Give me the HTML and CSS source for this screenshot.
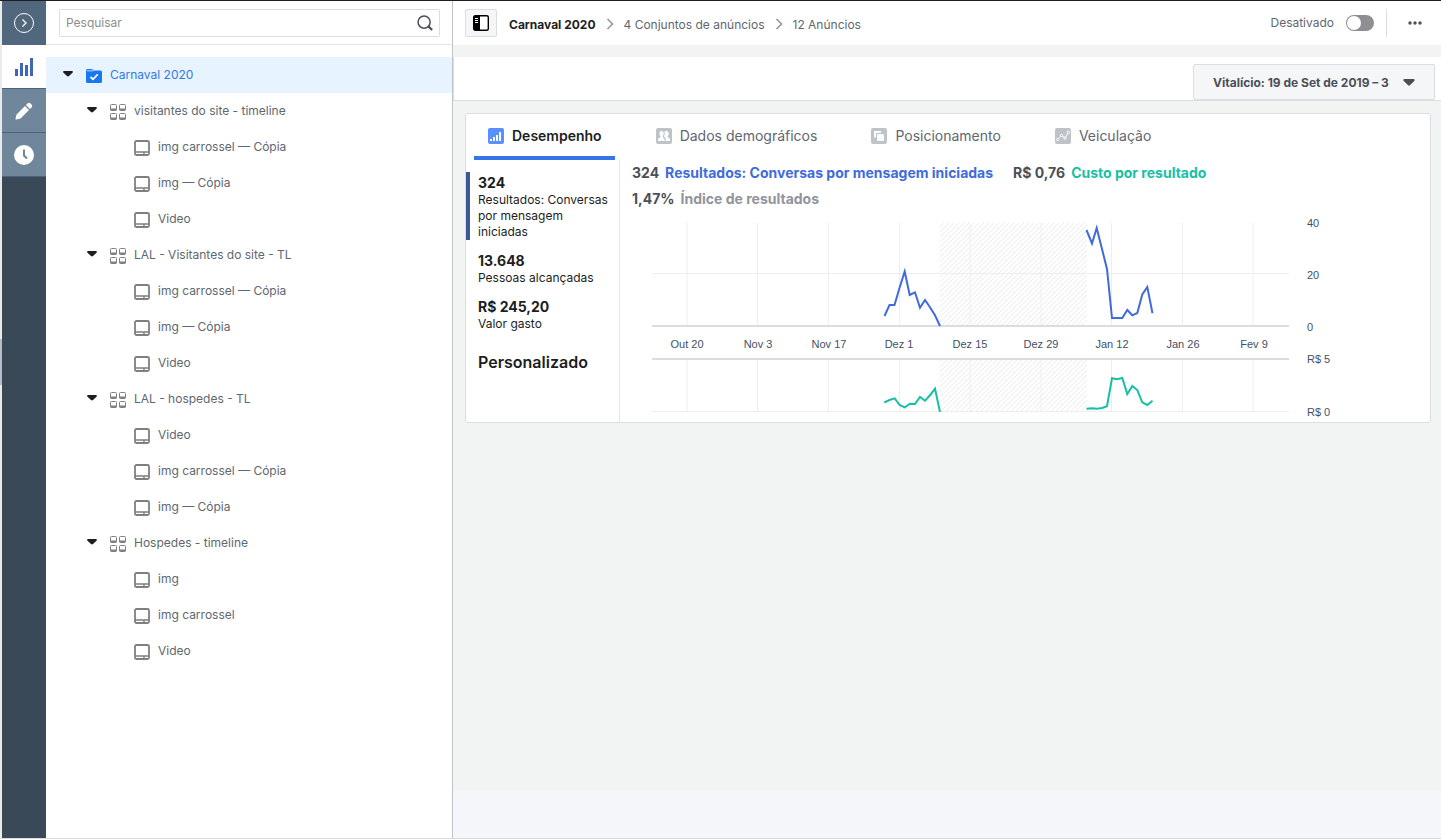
FILE: index.html
```html
<!DOCTYPE html>
<html lang="pt-BR">
<head>
  <meta charset="UTF-8" />
  <meta name="viewport" content="width=device-width, initial-scale=1.0"/>
  <title>Carnaval 2020</title>
  <link rel="stylesheet" href="styles.css">
</head>
<body>
  <!-- Shared icons -->
  <svg class="defs" width="0" height="0" aria-hidden="true">
    <symbol id="caret" viewBox="0 0 10 6"><path d="M1.2 0h7.6c1 0 1.4 1 .7 1.7L6 5.1c-.6.6-1.4.6-2 0L.5 1.7C-.2 1 .2 0 1.2 0z" fill="currentColor"/></symbol>
    <symbol id="adset" viewBox="0 0 16 16">
      <g fill="none" stroke="#7f7f7f">
        <rect x=".5" y=".5" width="6" height="6" rx="1"/><rect x="9.5" y=".5" width="6" height="6" rx="1"/>
        <rect x=".5" y="9.500" width="6" height="6" rx="1"/><rect x="9.500" y="9.500" width="6" height="6" rx="1"/>
      </g>
      <path d="M.5 4.500h6v2h-6zM9.500 4.500h6v2h-6zM.5 13.500h6v2h-6zM9.500 13.500h6v2h-6z" fill="#7f7f7f"/>
    </symbol>
    <symbol id="ad" viewBox="0 0 16 16">
      <rect x="1" y="1" width="14" height="14" rx="1.500" fill="none" stroke="#7f7f7f" stroke-width="1.800"/>
      <path d="M1 12h14M10 12v3" stroke="#7f7f7f" stroke-width="1.400"/>
    </symbol>
    <symbol id="chevron" viewBox="0 0 8 12"><path d="M1.500 1l5 5-5 5" fill="none" stroke="#8d949e" stroke-width="1.500"/></symbol>
  </svg>

  <div class="app">
    <div class="backdrop"></div>

    <nav class="rail">
      <button class="rail-btn top" aria-label="Expandir">
        <svg width="22" height="22" viewBox="0 0 22 22" fill="none" stroke="#fff"><circle cx="11" cy="11" r="9.500"/><path d="M9.500 7.500L13 11l-3.500 3.500" stroke-width="1.300"/></svg>
      </button>
      <button class="rail-btn active" aria-label="Gráficos">
        <svg width="18" height="18" viewBox="0 0 18 18" fill="#4267b2"><path d="M0 11h3v7H0zM5 5h3v13H5zM10 7h3v11h-3zM15 0h3v18h-3z"/></svg>
      </button>
      <button class="rail-btn" aria-label="Editar">
        <svg width="18" height="18" viewBox="0 0 18 18" fill="#fff"><path d="M10 4l4 4-8.500 8.500L1.300 17.600C.8 17.700.3 17.300.5 16.700L1.500 12.500z"/><path d="M11 3l1.500-1.500c.9-.9 2.200-.9 3 0l1 1c.9.900.9 2.100 0 3L15 7z"/></svg>
      </button>
      <button class="rail-btn" aria-label="Histórico">
        <svg width="20" height="20" viewBox="0 0 20 20"><circle cx="10" cy="10" r="10" fill="#fff"/><path d="M10 4.500v6l3 3" fill="none" stroke="#70869b" stroke-width="2"/></svg>
      </button>
    </nav>

    <aside class="sidebar">
      <form class="search">
        <input type="search" placeholder="Pesquisar" aria-label="Pesquisar">
        <button type="button" aria-label="Buscar">
          <svg width="16" height="16" viewBox="0 0 18 18" fill="none" stroke="#4b4f56" stroke-width="1.700"><circle cx="8" cy="8" r="6.800"/><path d="M12.800 12.800L17 17" stroke-width="2.400"/></svg>
        </button>
      </form>
      <ul class="tree">
        <li>
          <a href="#" class="row selected"><svg class="caret"><use href="#caret"/></svg>
            <svg class="icon" viewBox="0 0 16 16"><path d="M0 2.500C0 1.700.7 1 1.500 1h4.300c.5 0 .9.300 1.100.7l.3.800h7.300c.8 0 1.500.7 1.500 1.500v9.500c0 .8-.7 1.500-1.500 1.500h-13C.7 15 0 14.300 0 13.500z" fill="#1877f2"/><path d="M.8 2.800h6.500" stroke="#e7f3ff" stroke-width=".8"/><path d="M4.500 9l2.500 2.300 4.700-5" fill="none" stroke="#fff" stroke-width="1.700"/></svg><span>Carnaval 2020</span></a>
          <ul>
            <li>
              <a href="#" class="row"><svg class="caret"><use href="#caret"/></svg><svg class="icon"><use href="#adset"/></svg><span>visitantes do site - timeline</span></a>
              <ul>
                <li><a href="#" class="row ad"><svg class="icon"><use href="#ad"/></svg><span>img carrossel — Cópia</span></a></li>
                <li><a href="#" class="row ad"><svg class="icon"><use href="#ad"/></svg><span>img — Cópia</span></a></li>
                <li><a href="#" class="row ad"><svg class="icon"><use href="#ad"/></svg><span>Video</span></a></li>
              </ul>
            </li>
            <li>
              <a href="#" class="row"><svg class="caret"><use href="#caret"/></svg><svg class="icon"><use href="#adset"/></svg><span>LAL - Visitantes do site - TL</span></a>
              <ul>
                <li><a href="#" class="row ad"><svg class="icon"><use href="#ad"/></svg><span>img carrossel — Cópia</span></a></li>
                <li><a href="#" class="row ad"><svg class="icon"><use href="#ad"/></svg><span>img — Cópia</span></a></li>
                <li><a href="#" class="row ad"><svg class="icon"><use href="#ad"/></svg><span>Video</span></a></li>
              </ul>
            </li>
            <li>
              <a href="#" class="row"><svg class="caret"><use href="#caret"/></svg><svg class="icon"><use href="#adset"/></svg><span>LAL - hospedes - TL</span></a>
              <ul>
                <li><a href="#" class="row ad"><svg class="icon"><use href="#ad"/></svg><span>Video</span></a></li>
                <li><a href="#" class="row ad"><svg class="icon"><use href="#ad"/></svg><span>img carrossel — Cópia</span></a></li>
                <li><a href="#" class="row ad"><svg class="icon"><use href="#ad"/></svg><span>img — Cópia</span></a></li>
              </ul>
            </li>
            <li>
              <a href="#" class="row"><svg class="caret"><use href="#caret"/></svg><svg class="icon"><use href="#adset"/></svg><span>Hospedes - timeline</span></a>
              <ul>
                <li><a href="#" class="row ad"><svg class="icon"><use href="#ad"/></svg><span>img</span></a></li>
                <li><a href="#" class="row ad"><svg class="icon"><use href="#ad"/></svg><span>img carrossel</span></a></li>
                <li><a href="#" class="row ad"><svg class="icon"><use href="#ad"/></svg><span>Video</span></a></li>
              </ul>
            </li>
          </ul>
        </li>
      </ul>
    </aside>

    <main class="main">
      <header class="topbar">
        <button class="panel-btn" aria-label="Mostrar painel">
          <svg width="16" height="16" viewBox="0 0 16 16"><rect x=".7" y=".7" width="14.600" height="14.600" rx="1.500" fill="#fff" stroke="#000" stroke-width="1.400"/><path d="M1 1h6v14H1z"/><path d="M2 3.500h3M2 5.500h3M2 7.500h3" stroke="#fff"/></svg>
        </button>
        <nav class="crumbs">
          <a href="#" class="current">Carnaval 2020</a>
          <svg width="8" height="12"><use href="#chevron"/></svg>
          <a href="#">4 Conjuntos de anúncios</a>
          <svg width="8" height="12"><use href="#chevron"/></svg>
          <a href="#">12 Anúncios</a>
        </nav>
        <label class="status" for="enabled">Desativado</label>
        <input type="checkbox" id="enabled" class="toggle">
        <button class="more" aria-label="Mais opções">
          <svg width="14" height="4" viewBox="0 0 14 4" fill="#4b4f56"><circle cx="2" cy="2" r="1.700"/><circle cx="7" cy="2" r="1.700"/><circle cx="12" cy="2" r="1.700"/></svg>
        </button>
      </header>

      <div class="datebar">
        <button class="date"><span>Vitalício: 19 de Set de 2019 – 3</span><svg width="12" height="7"><use href="#caret"/></svg></button>
      </div>

      <section class="card">
        <div class="tabs">
          <button class="tab active"><svg width="16" height="16" viewBox="0 0 16 16"><rect width="16" height="16" rx="2" fill="#5890ff"/><path d="M2 11h2v2H2zM5 9h2v4H5zM8 7h2v6H8zM11 4h2v9h-2z" fill="#fff"/></svg><span>Desempenho</span></button>
          <button class="tab"><svg width="16" height="16" viewBox="0 0 16 16"><rect width="16" height="16" rx="2" fill="#bec3c9"/><path d="M5.500 3C4 3 3.500 4 3.500 5.500S4.200 8 4.500 8.300v1L2 10.800V13h6.500v-2.300L6.800 9.300v-1c.4-.5.900-1.500.9-2.800S7 3 5.500 3zM10.300 3c-1 0-1.600.4-1.800 1 .3.600.3 2.400-.3 3.700v1.100l1.500 1.300V13H14v-2.200l-2.300-1.500v-1c.5-.5 1-1.500 1-2.800C12.700 4 11.800 3 10.300 3z" fill="#fff"/></svg><span>Dados demográficos</span></button>
          <button class="tab"><svg width="16" height="16" viewBox="0 0 16 16"><rect width="16" height="16" rx="2" fill="#bec3c9"/><path d="M4 9.500V4h6" fill="none" stroke="#fff" stroke-width="2"/><rect x="6" y="6" width="7" height="7" rx="1" fill="#fff"/></svg><span>Posicionamento</span></button>
          <button class="tab"><svg width="16" height="16" viewBox="0 0 16 16"><rect width="16" height="16" rx="2" fill="#bec3c9"/><g fill="#bec3c9" stroke="#fff"><path d="M2.500 11.500l4-4 3.500 2.500 3.500-5.500" fill="none"/><circle cx="2.700" cy="11.500" r="1.200"/><circle cx="6.500" cy="7.500" r="1.200"/><circle cx="10" cy="10" r="1.200"/><circle cx="13.300" cy="4.300" r="1.200"/></g></svg><span>Veiculação</span></button>
        </div>

        <div class="content">
          <div class="metrics">
            <div class="metric active"><strong>324</strong>Resultados: Conversas por mensagem iniciadas</div>
            <div class="metric"><strong>13.648</strong>Pessoas alcançadas</div>
            <div class="metric"><strong>R$ 245,20</strong>Valor gasto</div>
            <h2>Personalizado</h2>
          </div>

          <div class="report">
            <div class="legend">
              <span><b>324</b><b class="results">Resultados: Conversas por mensagem iniciadas</b></span>
              <span><b>R$ 0,76</b><b class="cost">Custo por resultado</b></span>
              <span><b>1,47%</b><b class="rate">Índice de resultados</b></span>
            </div>

            <svg class="chart" viewBox="0 0 700 206" role="img" aria-label="Resultados e custo por resultado">
              <defs>
                <pattern id="hatch" width="5" height="5" patternUnits="userSpaceOnUse"><path d="M-1 1l2-2M0 5l5-5M4 6l2-2" stroke="#ececec"/></pattern>
              </defs>
              <rect class="gap" x="288" y="8" width="147" height="103"/>
              <rect class="gap" x="288" y="145" width="147" height="51"/>
              <path class="grid" d="M35 8v103M105.500 8v103M176.500 8v103M247.500 8v103M318 8v103M389 8v103M459.500 8v103M530.500 8v103M601 8v103M0 58.500h637"/>
              <path class="grid" d="M35 145v51M105.500 145v51M176.500 145v51M247.500 145v51M318 145v51M389 145v51M459.500 145v51M530.500 145v51M601 145v51M0 196.500h637"/>
              <path class="axis" d="M0 111h637M0 144h637"/>
              <polyline class="line results" points="232.500,101 237.500,90 242.500,90 247.500,73 252.700,56.500 257.700,80 263,77.300 268,92.700 273,85 278,92.300 283,100.300 288,111"/>
              <polyline class="line results" points="434.500,15 440,28.500 444.700,13 450,34 455,54 460,103 470.300,103 475.300,95 480.300,100.300 485.300,98 490.300,79.500 495.300,72 500.500,98.300"/>
              <polyline class="line cost" points="232.300,187.500 237.500,185 242.700,183.300 247.700,190 252.700,192.300 258,188.700 263,189 268,182 273,185.700 278,180.300 283,173.700 288,197"/>
              <polyline class="line cost" points="434.500,193.700 440,193.300 445,193.700 450,193 455,191.300 460,163.300 465,164.300 470.300,163 475.300,179 480.300,171 485.300,175 490.300,187.300 495.300,190 500.500,185.700"/>
              <g class="dates">
                <text x="35" y="133">Out 20</text><text x="106" y="133">Nov 3</text><text x="177" y="133">Nov 17</text><text x="247" y="133">Dez 1</text><text x="318" y="133">Dez 15</text><text x="389" y="133">Dez 29</text><text x="460" y="133">Jan 12</text><text x="531" y="133">Jan 26</text><text x="602" y="133">Fev 9</text>
              </g>
              <g class="values">
                <text x="655" y="12">40</text><text x="655" y="64">20</text><text x="655" y="116">0</text><text x="655" y="148">R$ 5</text><text x="655" y="201">R$ 0</text>
              </g>
            </svg>
          </div>
        </div>
      </section>

      <footer class="foot"></footer>
    </main>
  </div>
</body>
</html>
```

FILE: styles.css
```css
* {
  box-sizing: border-box;
}

body {
  margin: 0;
  background: #fff;
  font-family: Inter, 'Liberation Sans', sans-serif;
  font-size: 12px;
  color: #606770;
}

button, input {
  font: inherit;
  color: inherit;
  margin: 0;
}

button {
  padding: 0;
  border: none;
  background: none;
  cursor: pointer;
}

a {
  color: inherit;
  text-decoration: none;
}

svg {
  display: block;
  flex: none;
}

.defs {
  position: absolute;
}

.app {
  display: flex;
  min-height: 100vh;
  border-top: 1px solid #1c1e21;
  border-bottom: 1px solid #d8dadc;
}

.backdrop {
  width: 2px;
  background: linear-gradient(#e9ebe9 0 338px, #b5bfc5 338px 384px, #e9ebe9 384px);
}

/* Left rail */
.rail {
  display: flex;
  flex-direction: column;
  width: 44px;
  background: #3a4958;
}

.rail-btn {
  display: flex;
  align-items: center;
  justify-content: center;
  height: 44px;
  background: #70869b;
  border-bottom: 1px solid #4a6380;
}

.rail-btn.top {
  background: #51677d;
  border: none;
}

.rail-btn.active {
  background: #fff;
}

/* Campaign tree */
.sidebar {
  width: 407px;
  background: #fff;
  border-right: 1px solid #bec3c9;
}

.search {
  display: flex;
  align-items: center;
  height: 44px;
  padding: 0 12px 0 13px;
  border-bottom: 1px solid #e5e7e9;
}

.search input {
  flex: 1;
  height: 28px;
  padding: 0 6px;
  border: 1px solid #dadde1;
  border-right: none;
  border-radius: 2px 0 0 2px;
  outline: none;
}

.search input::placeholder {
  color: #8d8d8d;
}

.search button {
  height: 28px;
  padding: 0 6px;
  border: 1px solid #dadde1;
  border-left: none;
  border-radius: 0 2px 2px 0;
}

.tree, .tree ul {
  list-style: none;
  margin: 0;
  padding: 0;
}

.tree {
  padding-top: 12px;
}

.row {
  display: flex;
  align-items: center;
  height: 36px;
  padding-left: 18px;
}

.tree ul .row {
  padding-left: 42px;
}

.tree ul .row.ad {
  padding-left: 88px;
}

.row span {
  padding-bottom: 2px;
}

.row.selected {
  background: #e7f3ff;
  color: #3578e5;
}

.caret {
  width: 10px;
  height: 6px;
  margin: 0 13px 2px 0;
  color: #1c1e21;
}

.row .caret {
  margin-left: -1px;
}

.icon {
  width: 16px;
  height: 16px;
  margin: 2px 8px 0 0;
}

/* Main column */
.main {
  flex: 1;
  min-width: 0;
  display: flex;
  flex-direction: column;
  background: #f2f4f4;
}

.topbar {
  display: flex;
  align-items: center;
  height: 44px;
  padding: 0 12px;
  background: #fff;
}

.panel-btn {
  display: flex;
  align-items: center;
  justify-content: center;
  width: 32px;
  height: 28px;
  background: #f5f6f7;
  border: 1px solid #dadde1;
  border-radius: 2px;
}

.crumbs {
  flex: 1;
  display: flex;
  align-items: center;
  gap: 10px;
  padding: 2px 0 0 12px;
}

.crumbs .current {
  font-weight: 700;
  color: #1c1e21;
}

.status {
  padding-bottom: 2px;
}

.toggle {
  appearance: none;
  width: 28px;
  height: 16px;
  margin: 0 12px;
  padding: 1px;
  border-radius: 8px;
  background: #8d8f92;
}

.toggle::before {
  content: '';
  display: block;
  width: 14px;
  height: 14px;
  border-radius: 50%;
  background: #fff;
}

.toggle:checked::before {
  margin-left: auto;
}

.more {
  height: 28px;
  padding: 0 7px 0 21px;
  border-left: 1px solid #dadde1;
}

.datebar {
  display: flex;
  justify-content: flex-end;
  align-items: flex-end;
  height: 44px;
  margin-top: 12px;
  padding-right: 6px;
  background: #fff;
  border-left: 1px solid #dadde1;
  border-bottom: 1px solid #dadde1;
}

.date {
  display: flex;
  align-items: center;
  gap: 9px;
  width: 242px;
  height: 36px;
  padding: 0 19px;
  background: #f5f6f7;
  border: 1px solid #dadde1;
  border-radius: 2px;
  color: #4b4f56;
  font-weight: 700;
}

.date span {
  flex: 1;
  white-space: nowrap;
  text-align: left;
}

.card {
  margin: 12px 10px 0 12px;
  background: #fff;
  border: 1px solid #dadde1;
  border-radius: 3px;
}

.tabs {
  display: flex;
  gap: 27px;
  padding-left: 8px;
}

.tab {
  display: flex;
  align-items: center;
  gap: 8px;
  height: 46px;
  padding: 0 13px 0 14px;
  border-bottom: 4px solid transparent;
  font-size: 14px;
}

.tab svg {
  margin-top: 2px;
}

.tab.active {
  border-color: #3578e5;
  color: #1c1e21;
  font-weight: 600;
}

.content {
  display: flex;
}

.metrics {
  width: 154px;
  padding: 12px 0;
  border-right: 1px solid #e5e7e9;
  color: #1c1e21;
  line-height: 16px;
}

.metric {
  margin-bottom: 10px;
  padding: 2px 8px 0 12px;
}

.metric.active {
  padding-left: 8px;
  border-left: 4px solid #3b5998;
}

.metric strong {
  display: block;
  font-size: 14px;
  line-height: 18px;
}

.metrics h2 {
  margin: 20px 0 0 12px;
  font-size: 16px;
  font-weight: 600;
  line-height: 20px;
}

.report {
  flex: 1;
  padding: 0 12px;
}

.legend {
  display: flex;
  flex-wrap: wrap;
  column-gap: 20px;
  max-width: 640px;
  font-size: 14px;
  line-height: 26px;
  color: #4b4f56;
}

.legend span {
  display: flex;
  gap: 6px;
}

.legend .results {
  color: #3f6bdb;
}

.legend .cost {
  color: #17bfa5;
}

.legend .rate {
  color: #90949c;
}

.chart {
  width: 100%;
  max-width: 700px;
  margin: 3px 0 1px 20px;
  font-family: 'Liberation Sans', sans-serif;
  font-size: 11px;
}

.gap {
  fill: url(#hatch);
}

.grid {
  fill: none;
  stroke: #eeeeef;
}

.axis {
  fill: none;
  stroke: #dcdde0;
  stroke-width: 2;
}

.line {
  fill: none;
  stroke-width: 2;
}

.line.results {
  stroke: #3f6bdb;
}

.line.cost {
  stroke: #17bfa5;
}

.dates, .values {
  fill: #445064;
}

.dates {
  text-anchor: middle;
}

.foot {
  height: 48px;
  margin-top: auto;
  background: #f5f6f9;
}
```
